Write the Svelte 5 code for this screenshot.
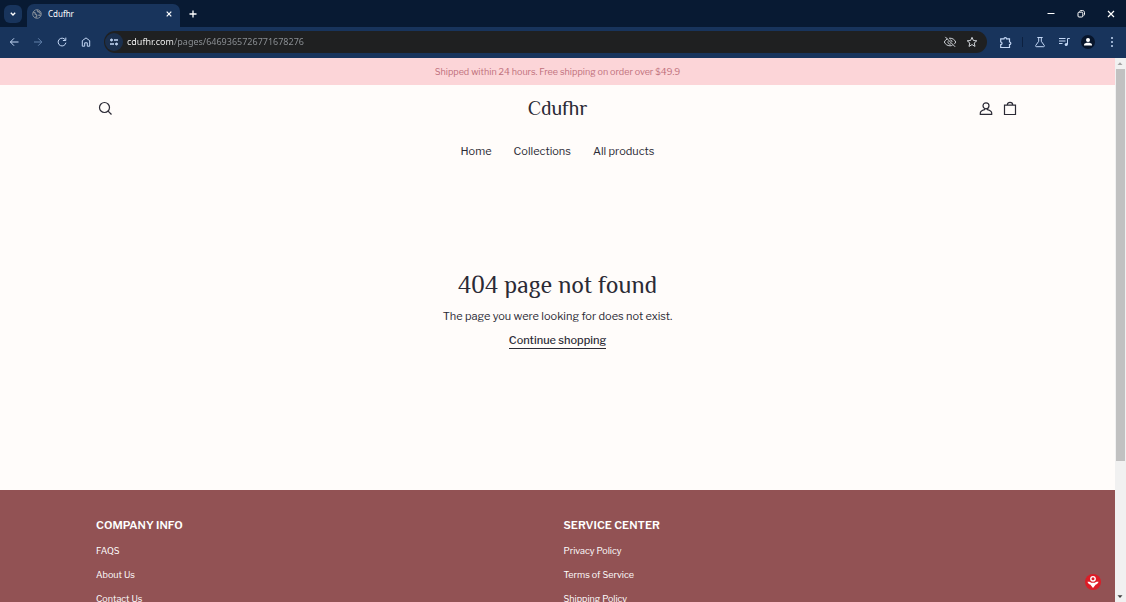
<script lang="ts">
  let address = $state('cdufhr.com/pages/6469365726771678276');

  const menu = ['Home', 'Collections', 'All products'];

  const footerColumns = [
    { title: 'COMPANY INFO', links: ['FAQS', 'About Us', 'Contact Us'] },
    { title: 'SERVICE CENTER', links: ['Privacy Policy', 'Terms of Service', 'Shipping Policy'] },
  ];
</script>

<div class="window">
  <div class="tab-strip">
    <button class="tab-search" aria-label="Search tabs">
      <svg width="8" height="8" viewBox="0 0 8 8"><path d="M1.8 2.8 4 5l2.2-2.2" stroke-width="1.4" /></svg>
    </button>
    <div class="tab">
      <svg class="favicon" width="10" height="10" viewBox="0 0 10 10">
        <circle cx="5" cy="5" r="4.3" />
        <path d="M1 3.5c1.6-.5 2.3.2 2.2 1.2s1.6.5 1.6 1.7-.9 1-.9 2.6M5.5 1c-.4 1.5.5 1.8 1.4 1.8S7.4 4.4 9 4.6M6.3 6.2h2.5" stroke-width="1.4" />
      </svg>
      <span class="tab-title">Cdufhr</span>
      <button class="tab-close" aria-label="Close tab">
        <svg width="8" height="8" viewBox="0 0 8 8"><path d="m1.7 1.7 4.6 4.6M6.3 1.7 1.7 6.3" stroke-width="1.2" /></svg>
      </button>
    </div>
    <button class="new-tab" aria-label="New tab">
      <svg width="10" height="10" viewBox="0 0 10 10"><path d="M5 1.5v7M1.5 5h7" stroke-width="1.3" /></svg>
    </button>
    <div class="window-controls">
      <button aria-label="Minimize">
        <svg width="10" height="10" viewBox="0 0 10 10"><path d="M1.5 4.5h7" /></svg>
      </button>
      <button aria-label="Restore">
        <svg width="10" height="10" viewBox="0 0 10 10">
          <rect x="2" y="3.2" width="4.8" height="4.8" rx="1" />
          <path d="M3.5 2.5c.2-.6.6-.9 1.2-.9h2c1 0 1.8.8 1.8 1.8v2c0 .6-.3 1-.9 1.2" />
        </svg>
      </button>
      <button aria-label="Close">
        <svg width="10" height="10" viewBox="0 0 10 10"><path d="m2 2 6 6M8 2 2 8" stroke-width="1.2" /></svg>
      </button>
    </div>
  </div>

  <div class="toolbar">
    <button aria-label="Back">
      <svg width="12" height="12" viewBox="0 0 12 12"><path d="M10.5 6H2.4M6 2.3 2.4 6 6 9.7" /></svg>
    </button>
    <button class="dimmed" aria-label="Forward">
      <svg width="12" height="12" viewBox="0 0 12 12"><path d="M2 6h7.8M6.2 2.3 9.8 6 6.2 9.7" /></svg>
    </button>
    <button aria-label="Reload">
      <svg width="12" height="12" viewBox="0 0 12 12"><path d="M9.3 3.9A3.9 3.9 0 1 0 9.9 6.7M9.8 1.6v2.9H6.9" /></svg>
    </button>
    <button aria-label="Home">
      <svg width="12" height="12" viewBox="0 0 12 12"><path d="M2.3 10.2V4.7L6 1.9l3.7 2.8v5.5H7.3V6.8H4.7v3.4z" /></svg>
    </button>
    <div class="omnibox">
      <button class="site-info" aria-label="View site information">
        <svg width="10" height="10" viewBox="0 0 10 10">
          <circle cx="2.5" cy="3" r="1" fill="currentColor" />
          <path d="M5 3h4M1 7h4" stroke-width="1.3" />
          <circle cx="7.5" cy="7" r="1" fill="currentColor" />
        </svg>
      </button>
      <input class="address" aria-label="Address" spellcheck="false" bind:value={address} />
      <button aria-label="Third-party cookies blocked">
        <svg width="14" height="14" viewBox="0 0 14 14">
          <path d="M4.3 3.9C2.9 4.6 1.9 5.7 1.3 7c1 2.3 3.1 3.8 5.7 3.8.9 0 1.7-.2 2.5-.5M6 3.3 7 3.2c2.6 0 4.7 1.5 5.7 3.8-.4.9-.9 1.6-1.6 2.2M5.1 6.3a2.1 2.1 0 0 0 2.7 2.7M7.2 4.9A2.1 2.1 0 0 1 9.1 6.900M2.3 1.900l9.8 9.900" />
        </svg>
      </button>
      <button aria-label="Bookmark this page">
        <svg width="12" height="12" viewBox="0 0 12 12"><path d="m6 1.3 1.4 3.2 3.4.3-2.6 2.2.8 3.4L6 8.6l-3 1.8.8-3.4-2.6-2.2 3.4-.3z" /></svg>
      </button>
    </div>
    <button aria-label="Extensions">
      <svg width="13" height="13" viewBox="0 0 13 13"><path d="M1.7 2.9H5c0-1.8 2.6-1.8 2.6 0h2.9V6c1.8 0 1.8 2.6 0 2.6v2.9H1.7V8.7c1.8 0 1.8-2.7 0-2.7z" stroke-width="1.2" /></svg>
    </button>
    <span class="divider"></span>
    <button aria-label="Experiments">
      <svg width="12" height="12" viewBox="0 0 12 12"><path d="M3.3 1.5h5.4M4.7 1.7v3.6L1.7 9.5c-.3.6 0 1.2.6 1.2h7.4c.6 0 .9-.6.6-1.2l-3-4.2V1.7" /></svg>
    </button>
    <button aria-label="Media controls">
      <svg width="12" height="12" viewBox="0 0 12 12">
        <path d="M1 2.5h6.5M1 5h6.5M1 7.5h3.5M9.5 8.5v-6h2.3" />
        <circle cx="8.2" cy="8.5" r="1.5" fill="currentColor" stroke="none" />
      </svg>
    </button>
    <button aria-label="Profile">
      <svg width="14" height="14" viewBox="0 0 14 14">
        <circle cx="7" cy="7" r="7" fill="#07152b" stroke="none" />
        <circle cx="7" cy="5" r="2" fill="#fff" stroke="none" />
        <path d="M3 10.5V9.7C3 8.3 5.3 7.7 7 7.7s4 .6 4 2v.8z" fill="#fff" stroke="none" />
      </svg>
    </button>
    <button aria-label="Menu">
      <svg width="12" height="12" viewBox="0 0 12 12">
        <g fill="currentColor" stroke="none"><circle cx="6" cy="2" r="1" /><circle cx="6" cy="6" r="1" /><circle cx="6" cy="10" r="1" /></g>
      </svg>
    </button>
  </div>

  <div class="viewport">
    <div class="page">
      <p class="announcement">Shipped within 24 hours. Free shipping on order over $49.9</p>

      <header>
        <div class="header-row">
          <button aria-label="Search">
            <svg width="20" height="20" viewBox="0 0 20 20"><circle cx="9.5" cy="9.5" r="5" /><path d="m13.1 13.1 3.4 3.4" /></svg>
          </button>
          <a class="logo" href="#home">Cdufhr</a>
          <div class="header-actions">
            <button aria-label="Account">
              <svg width="20" height="20" viewBox="0 0 20 20">
                <circle cx="10" cy="7.8" r="3" />
                <path d="M8.6 10.6v1c-2.2.6-4.3 1.4-4.3 3.4v1.3h11.4V15c0-2-2.1-2.8-4.300-3.400v-1" />
              </svg>
            </button>
            <button aria-label="Cart">
              <svg width="20" height="20" viewBox="0 0 20 20"><path d="M4.5 7.2h11v9.3h-11zM7.3 7c0-3.500 5.400-3.500 5.400 0" /></svg>
            </button>
          </div>
        </div>
        <nav>
          {#each menu as item}
            <a href="#{item}">{item}</a>
          {/each}
        </nav>
      </header>

      <main>
        <h1>404 page not found</h1>
        <p>The page you were looking for does not exist.</p>
        <a href="#collections">Continue shopping</a>
      </main>

      <footer>
        {#each footerColumns as column}
          <section>
            <h2>{column.title}</h2>
            <ul>
              {#each column.links as link}
                <li><a href="#{link}">{link}</a></li>
              {/each}
            </ul>
          </section>
        {/each}
      </footer>
    </div>

    <div class="scrollbar" aria-hidden="true">
      <svg width="10" height="11" viewBox="0 0 10 11"><path d="M2.5 7 5 4.2 7.5 7z" fill="#a3a3a3" stroke="none" /></svg>
      <div class="track"><div class="thumb"></div></div>
      <svg width="10" height="11" viewBox="0 0 10 11"><path d="M2.5 4.2h5L5 7z" fill="#404040" stroke="none" /></svg>
    </div>

    <button class="badge" aria-label="Open chat">
      <svg width="18" height="18" viewBox="0 0 18 18">
        <circle cx="9" cy="9" r="8" fill="#dc1c26" stroke="none" />
        <circle cx="9" cy="5.8" r="2.2" stroke-width="1.4" />
        <path d="M3.5 8.8c1.8-.3 2.8.1 3.5.9h4c.7-.8 1.7-1.2 3.5-.9-.3 1.6-1.4 2.4-2.7 2.7L9 15l-2.8-3.5C4.9 11.2 3.8 10.4 3.5 8.8z" fill="#fff" stroke="none" />
      </svg>
    </button>
  </div>
</div>

<style>
  :global(body) {
    margin: 0;
  }

  .window {
    --ink: #2b2a35;
    display: flex;
    flex-direction: column;
    height: 100vh;
    overflow: hidden;
    font-family: 'Libre Franklin', 'Liberation Sans', Arial, sans-serif;
  }

  button {
    display: flex;
    align-items: center;
    justify-content: center;
    padding: 0;
    border: 0;
    background: none;
    color: inherit;
    cursor: pointer;
  }

  svg {
    display: block;
    fill: none;
    stroke: currentColor;
  }

  a {
    color: inherit;
    text-decoration: none;
  }

  h1, h2, p, ul {
    margin: 0;
    padding: 0;
  }

  .tab-strip {
    display: flex;
    align-items: center;
    flex-shrink: 0;
    height: 27px;
    background: #081a33;
    color: #fff;
    font-family: 'Noto Sans', 'Open Sans', sans-serif;
  }

  .tab-search {
    width: 18px;
    height: 18px;
    margin: 0 5px 0 4px;
    border-radius: 6px;
    background: #18345c;
  }

  .tab {
    display: flex;
    align-items: center;
    align-self: flex-end;
    gap: 6px;
    box-sizing: border-box;
    width: 153px;
    height: 23px;
    padding: 0 5px 3px;
    border-radius: 7px 7px 0 0;
    background: #18345c;
  }

  .favicon {
    color: #7d8794;
  }

  .tab-title {
    flex: 1;
    font-size: 8px;
    line-height: 20px;
  }

  .tab-close {
    width: 12px;
    height: 20px;
  }

  .new-tab {
    width: 26px;
    height: 20px;
  }

  .window-controls {
    display: flex;
    margin-left: auto;
  }

  .window-controls button {
    width: 30px;
    height: 27px;
  }

  .toolbar {
    display: flex;
    align-items: center;
    flex-shrink: 0;
    height: 30px;
    padding: 0 2px 1px;
    background: #18345c;
    color: #c3d7f5;
  }

  .toolbar button {
    flex-shrink: 0;
    width: 24px;
    height: 22px;
  }

  .toolbar .dimmed {
    color: #6180aa;
  }

  .omnibox {
    display: flex;
    align-items: center;
    flex: 1;
    min-width: 0;
    height: 22px;
    margin: 0 6px;
    padding: 0 4px 0 1px;
    border-radius: 11px;
    background: #1f2021;
    color: #cfd3d8;
  }

  .omnibox button {
    width: 22px;
  }

  .omnibox .site-info {
    width: 18px;
    height: 18px;
    border-radius: 50%;
    background: #1b2f4d;
    color: #c3d7f5;
  }

  .address {
    flex: 1;
    min-width: 0;
    height: 18px;
    margin-left: 4px;
    padding: 0;
    border: 0;
    outline: 0;
    /* host name is bright, the path after it is dimmed */
    background: linear-gradient(to right, #fff 46px, #8f9398 46px);
    background-clip: text;
    color: transparent;
    font: 9px/18px 'Noto Sans', 'Open Sans', sans-serif;
  }

  .divider {
    width: 1px;
    height: 10px;
    margin: 0 5px;
    background: #0d2140;
  }

  .viewport {
    position: relative;
    display: flex;
    flex: 1;
    min-height: 0;
    background: #fffcfa;
  }

  .page {
    flex: 1;
    overflow: hidden;
    color: var(--ink);
  }

  .announcement {
    background: #fcd5d8;
    color: #c0707c;
    font-size: 9px;
    line-height: 27px;
    text-align: center;
  }

  .header-row {
    display: grid;
    grid-template-columns: 1fr auto 1fr;
    align-items: center;
    height: 46px;
    padding: 0 95px;
  }

  .header-row button {
    width: 20px;
    height: 20px;
  }

  .header-row svg {
    stroke-width: 1.2;
  }

  .header-actions {
    display: flex;
    justify-content: flex-end;
    gap: 4px;
  }

  .logo,
  h1 {
    font-family: 'Philosopher', 'Liberation Serif', serif;
    font-weight: 400;
  }

  .logo {
    font-size: 20px;
    line-height: 24px;
  }

  nav {
    display: flex;
    justify-content: center;
    gap: 22px;
    padding: 10px 0;
    font-size: 11px;
    line-height: 20px;
  }

  main {
    display: flex;
    flex-direction: column;
    align-items: center;
    padding: 96px 0 141px;
    font-size: 11px;
  }

  h1 {
    font-size: 24px;
    line-height: 36px;
  }

  main p {
    padding: 3px 0 6px;
    line-height: 20px;
  }

  main a {
    border-bottom: 1px solid var(--ink);
    font-weight: 500;
    line-height: 16px;
  }

  footer {
    display: grid;
    grid-template-columns: 1fr 1fr;
    gap: 12px;
    padding: 25px 96px;
    background: #925254;
    color: #fff;
  }

  h2 {
    margin-bottom: 4px;
    font-size: 11px;
    font-weight: 600;
    line-height: 20px;
  }

  ul {
    list-style: none;
    font-size: 9px;
    line-height: 24px;
  }

  .scrollbar {
    display: flex;
    flex-direction: column;
    width: 11px;
    background: #f1f1f1;
  }

  .track {
    flex: 1;
    padding: 0 1px;
  }

  .thumb {
    height: 75%;
    background: #c1c1c1;
  }

  .badge {
    position: absolute;
    right: 24px;
    bottom: 11px;
    color: #fff;
  }
</style>
